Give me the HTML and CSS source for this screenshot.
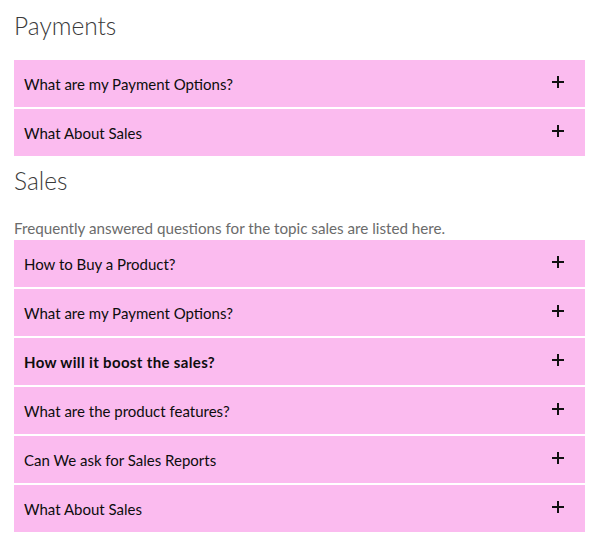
FILE: index.html
```html
<!DOCTYPE html>
<html>
<head>
<meta charset="utf-8">
<link rel="stylesheet" href="styles.css">
</head>
<body>
<section class="topic">
  <h2 class="topic-title">Payments</h2>
  <div class="faq-list">
    <div class="faq-item"><span class="q">What are my Payment Options?</span><span class="plus"></span></div>
    <div class="faq-item"><span class="q">What About Sales</span><span class="plus"></span></div>
  </div>
</section>
<section class="topic">
  <h2 class="topic-title">Sales</h2>
  <p class="topic-desc">Frequently answered questions for the topic sales are listed here.</p>
  <div class="faq-list">
    <div class="faq-item"><span class="q">How to Buy a Product?</span><span class="plus"></span></div>
    <div class="faq-item"><span class="q">What are my Payment Options?</span><span class="plus"></span></div>
    <div class="faq-item"><span class="q bold">How will it boost the sales?</span><span class="plus"></span></div>
    <div class="faq-item"><span class="q">What are the product features?</span><span class="plus"></span></div>
    <div class="faq-item"><span class="q">Can We ask for Sales Reports</span><span class="plus"></span></div>
    <div class="faq-item"><span class="q">What About Sales</span><span class="plus"></span></div>
  </div>
</section>
</body>
</html>
```

FILE: styles.css
```css
html, body {
  margin: 0;
  padding: 0;
  background: #fff;
}
body {
  padding: 0 18px 0 14px;
  font-family: "Lato", "Noto Sans", sans-serif;
}
.topic-title {
  margin: 0;
  font-weight: 300;
  font-size: 24.5px;
  line-height: 25px;
  color: #3a3a3a;
}
.topic:first-child .topic-title {
  padding-top: 13px;
  padding-bottom: 22px;
}
.topic + .topic .topic-title {
  padding-top: 12px;
}
.topic-desc {
  margin: 0;
  padding-top: 25px;
  font-size: 15.2px;
  line-height: 20px;
  color: #6b6b6b;
  padding-bottom: 2px;
}
.faq-list {
  display: flex;
  flex-direction: column;
  gap: 2px;
}
.faq-item {
  height: 47px;
  box-sizing: border-box;
  background: #fbbbef;
  display: flex;
  align-items: center;
  justify-content: space-between;
  padding: 0 21px 0 10px;
  font-size: 15px;
  color: #0d0d0d;
}
.q.bold { font-weight: 700; letter-spacing: 0.35px; }
.plus {
  position: relative;
  width: 12px;
  height: 12px;
  margin-top: -3px;
}
.plus::before, .plus::after {
  content: "";
  position: absolute;
  background: #111;
}
.plus::before { left: 0; right: 0; top: 5px; height: 2px; }
.plus::after { top: 0; bottom: 0; left: 5px; width: 2px; }
```
